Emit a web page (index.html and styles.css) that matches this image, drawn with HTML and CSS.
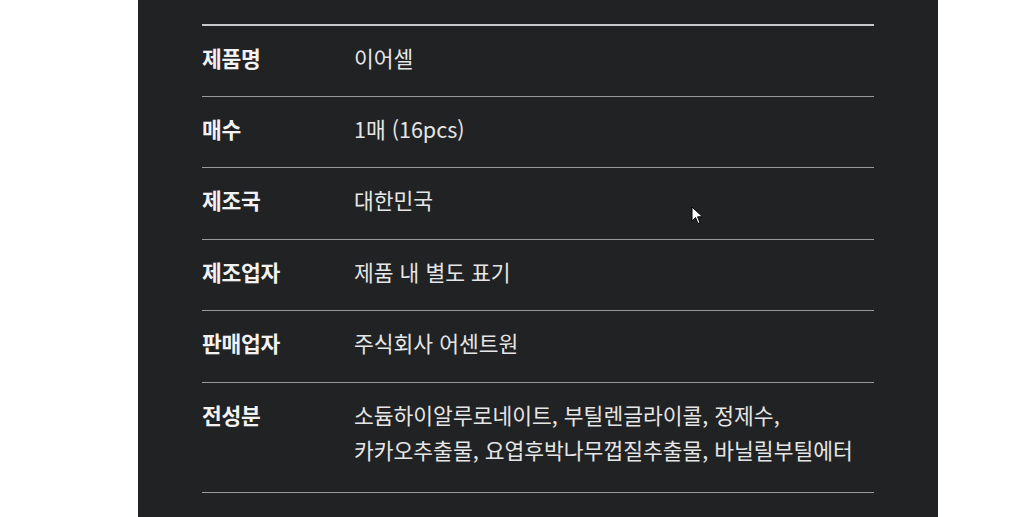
FILE: index.html
```html
<!DOCTYPE html>
<html lang="ko">
<head>
<meta charset="utf-8">
<link rel="stylesheet" href="styles.css">
</head>
<body>
<div class="page">
  <section class="panel">
    <dl class="spec">
      <div class="row row-first"><dt>제품명</dt><dd>이어셀</dd></div>
      <div class="row"><dt>매수</dt><dd>1매 (16pcs)</dd></div>
      <div class="row"><dt>제조국</dt><dd>대한민국</dd></div>
      <div class="row"><dt>제조업자</dt><dd>제품 내 별도 표기</dd></div>
      <div class="row"><dt>판매업자</dt><dd>주식회사 어센트원</dd></div>
      <div class="row row-last"><dt>전성분</dt><dd>소듐하이알루로네이트, 부틸렌글라이콜, 정제수,<br>카카오추출물, 요엽후박나무껍질추출물, 바닐릴부틸에터</dd></div>
    </dl>
    <svg class="cursor" width="13" height="19" viewBox="0 0 13 19"><path d="M1 1 L1 15 L4.5 11.5 L7 17.5 L9 16.6 L6.6 10.8 L11.5 10.8 Z" fill="#fff" stroke="#000" stroke-width="1"/></svg>
  </section>
</div>
</body>
</html>
```
FILE: styles.css
```css
html, body {
  margin: 0;
  padding: 0;
  background: #ffffff;
}
body {
  font-family: "Noto Sans CJK KR", "Noto Sans", sans-serif;
}
.page {
  display: flex;
  padding-left: 138px;
}
.panel {
  position: relative;
  width: 800px;
  height: 517px;
  box-sizing: border-box;
  background: #212224;
  padding: 24px 64px 0;
}
.spec {
  margin: 0;
  border-top: 2px solid #c9c9c9;
}
.row {
  display: flex;
  padding: 14.3px 0 21.2px;
  border-bottom: 1px solid #9a9a9a;
  line-height: 35px;
  font-size: 21.5px;
}
.row-first {
  padding-top: 13.5px;
}
.row-last {
  padding-bottom: 25px;
}
.row dt {
  width: 152px;
  flex: none;
  font-weight: 700;
  color: #f2f2f2;
  letter-spacing: -0.3px;
}
.row dd {
  margin: 0;
  color: #e6e6e6;
  letter-spacing: 0;
}
.cursor {
  position: absolute;
  left: 553px;
  top: 206px;
}
```
